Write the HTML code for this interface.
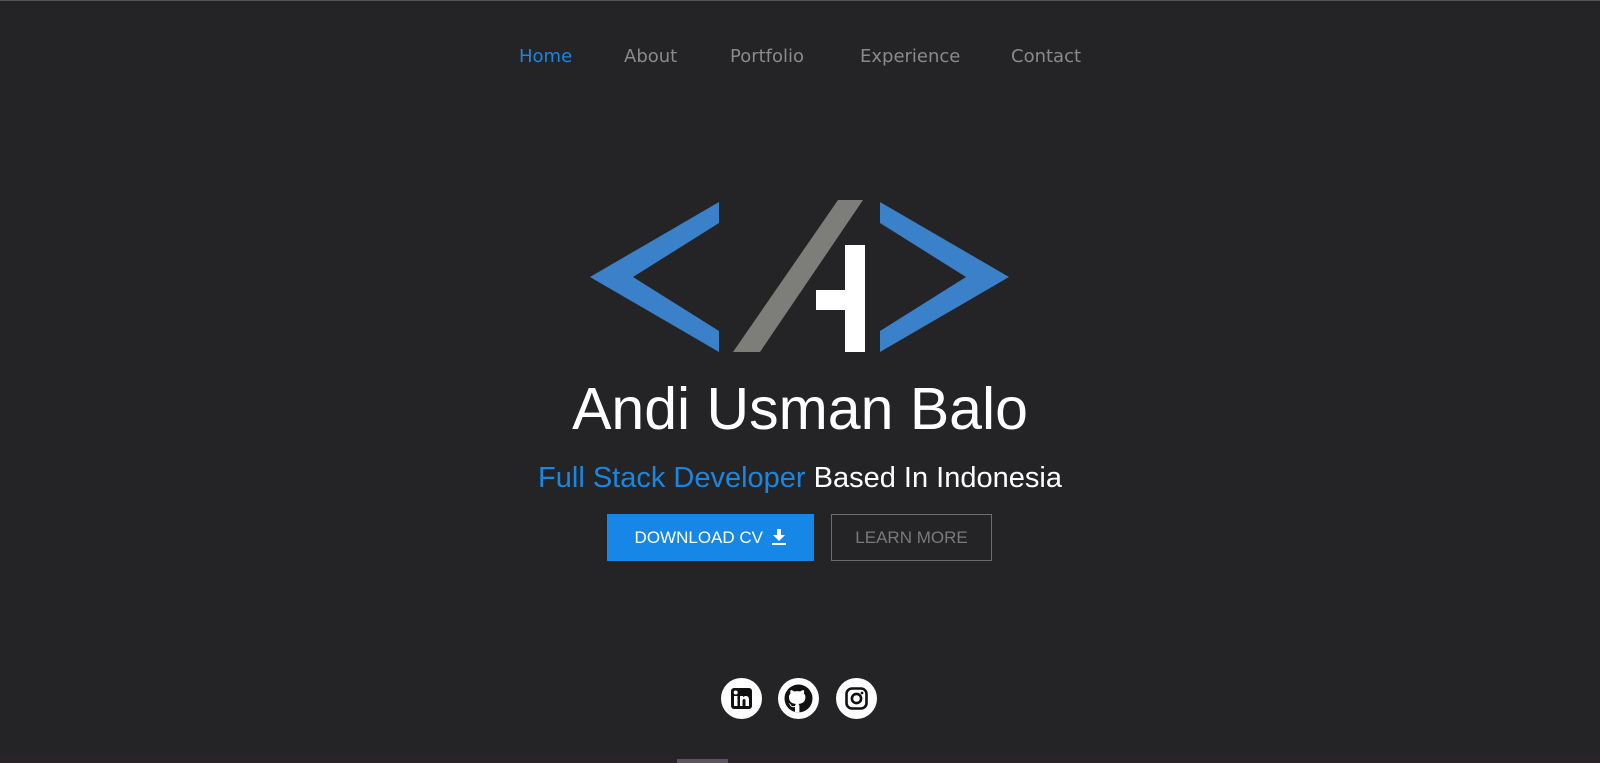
<!DOCTYPE html>
<html><head><meta charset="utf-8"><style>
*{margin:0;padding:0;box-sizing:border-box}
html,body{width:1600px;height:763px;overflow:hidden;background:#242427;font-family:"Liberation Sans",sans-serif}
.top{position:absolute;left:0;top:0;width:1600px;height:1px;background:#555}
.nav a{position:absolute;top:46px;color:#8a8a8a;text-decoration:none;font-family:"DejaVu Sans","Liberation Sans",sans-serif;font-size:18px}
.c{position:absolute;left:0;width:1600px;text-align:center}
.name{top:375px;font-size:59px;color:#fff;font-weight:500}
.sub{top:462px;font-size:29px;color:#fff}
.btn1{position:absolute;left:607px;top:514px;width:207px;height:47px;background:#1687e6;color:#fff;font-size:17px;line-height:47px;text-align:center}
.btn2{position:absolute;left:831px;top:514px;width:161px;height:47px;border:1px solid #6d6d6d;color:#7a7a7a;font-size:17px;line-height:45px;text-align:center}
.ic{position:absolute;top:678px;width:41px;height:41px;border-radius:50%;background:#fff}
.bot{position:absolute;left:0;top:758px;width:1600px;height:5px;background:#2a2228}
</style></head><body>
<div class="top"></div>
<div class="nav">
<a style="left:519px;color:#1a86e0">Home</a>
<a style="left:624px">About</a>
<a style="left:730px">Portfolio</a>
<a style="left:860px">Experience</a>
<a style="left:1011px">Contact</a>
</div>
<svg style="position:absolute;left:0;top:0" width="1600" height="763">
<polygon points="719,202 719,223 633,277 719,331 719,352 590,277" fill="#3a81c9"/>
<polygon points="880,202 880,223 966,277 880,331 880,352 1009,277" fill="#3a81c9"/>
<polygon points="733,352 760,352 863,200 838,200" fill="#7d7d7a"/>
<rect x="845" y="245" width="20" height="107" fill="#fff"/>
<rect x="816" y="290" width="30" height="20" fill="#fff"/>
</svg>
<div class="c name">Andi Usman Balo</div>
<div class="c sub"><span style="color:#1a86e0">Full Stack Developer</span> Based In Indonesia</div>
<div class="btn1">DOWNLOAD CV &nbsp;<svg width="14" height="16" viewBox="0 0 14 16" style="vertical-align:-2px"><path d="M5 0h4v6h4l-6 6-6-6h4z" fill="#fff"/><rect x="0" y="14" width="14" height="2" fill="#fff"/></svg></div>
<div class="btn2">LEARN MORE</div>
<div class="ic" style="left:721px"><svg width="41" height="41"><rect x="10" y="10" width="21" height="21" rx="3" fill="#111"/><rect x="13" y="18" width="3.5" height="10" fill="#fff"/><circle cx="14.7" cy="14.5" r="2" fill="#fff"/><path d="M19 18h3v1.5c1-2 6-2.5 6 2v6.5h-3.5v-5.5c0-2-3-2-3 0v5.5H19z" fill="#fff"/></svg></div>
<div class="ic" style="left:778px"><svg width="41" height="41" viewBox="0 0 41 41"><circle cx="20.5" cy="20.5" r="14" fill="#111"/><path d="M17 34v-5c-4 1-5-2-5-2-1-2-2-2-2-2 2 0 3 2 3 2 1 2 3 1 4 1 0-1 1-2 1-2-4-0.5-7-2-7-7 0-1.5 0.5-2.5 1.5-3.5-0.2-0.5-0.5-2 0.2-3.5 0 0 1.5 0 3.5 1.5a12 12 0 0 1 6 0c2-1.5 3.5-1.5 3.5-1.5 0.7 1.5 0.4 3 0.2 3.5 1 1 1.5 2 1.5 3.5 0 5-3 6.5-7 7 0.5 0.5 1 1.3 1 2.5v6z" fill="#fff"/></svg></div>
<div class="ic" style="left:836px"><svg width="41" height="41"><rect x="10.5" y="10.5" width="20" height="20" rx="5.5" fill="none" stroke="#111" stroke-width="2.6"/><circle cx="20.5" cy="20.5" r="4.6" fill="none" stroke="#111" stroke-width="2.6"/><circle cx="26" cy="15" r="1.4" fill="#111"/></svg></div>
<div class="bot"></div>
<div style="position:absolute;left:677px;top:759px;width:51px;height:4px;background:#5a5560"></div>
</body></html>
